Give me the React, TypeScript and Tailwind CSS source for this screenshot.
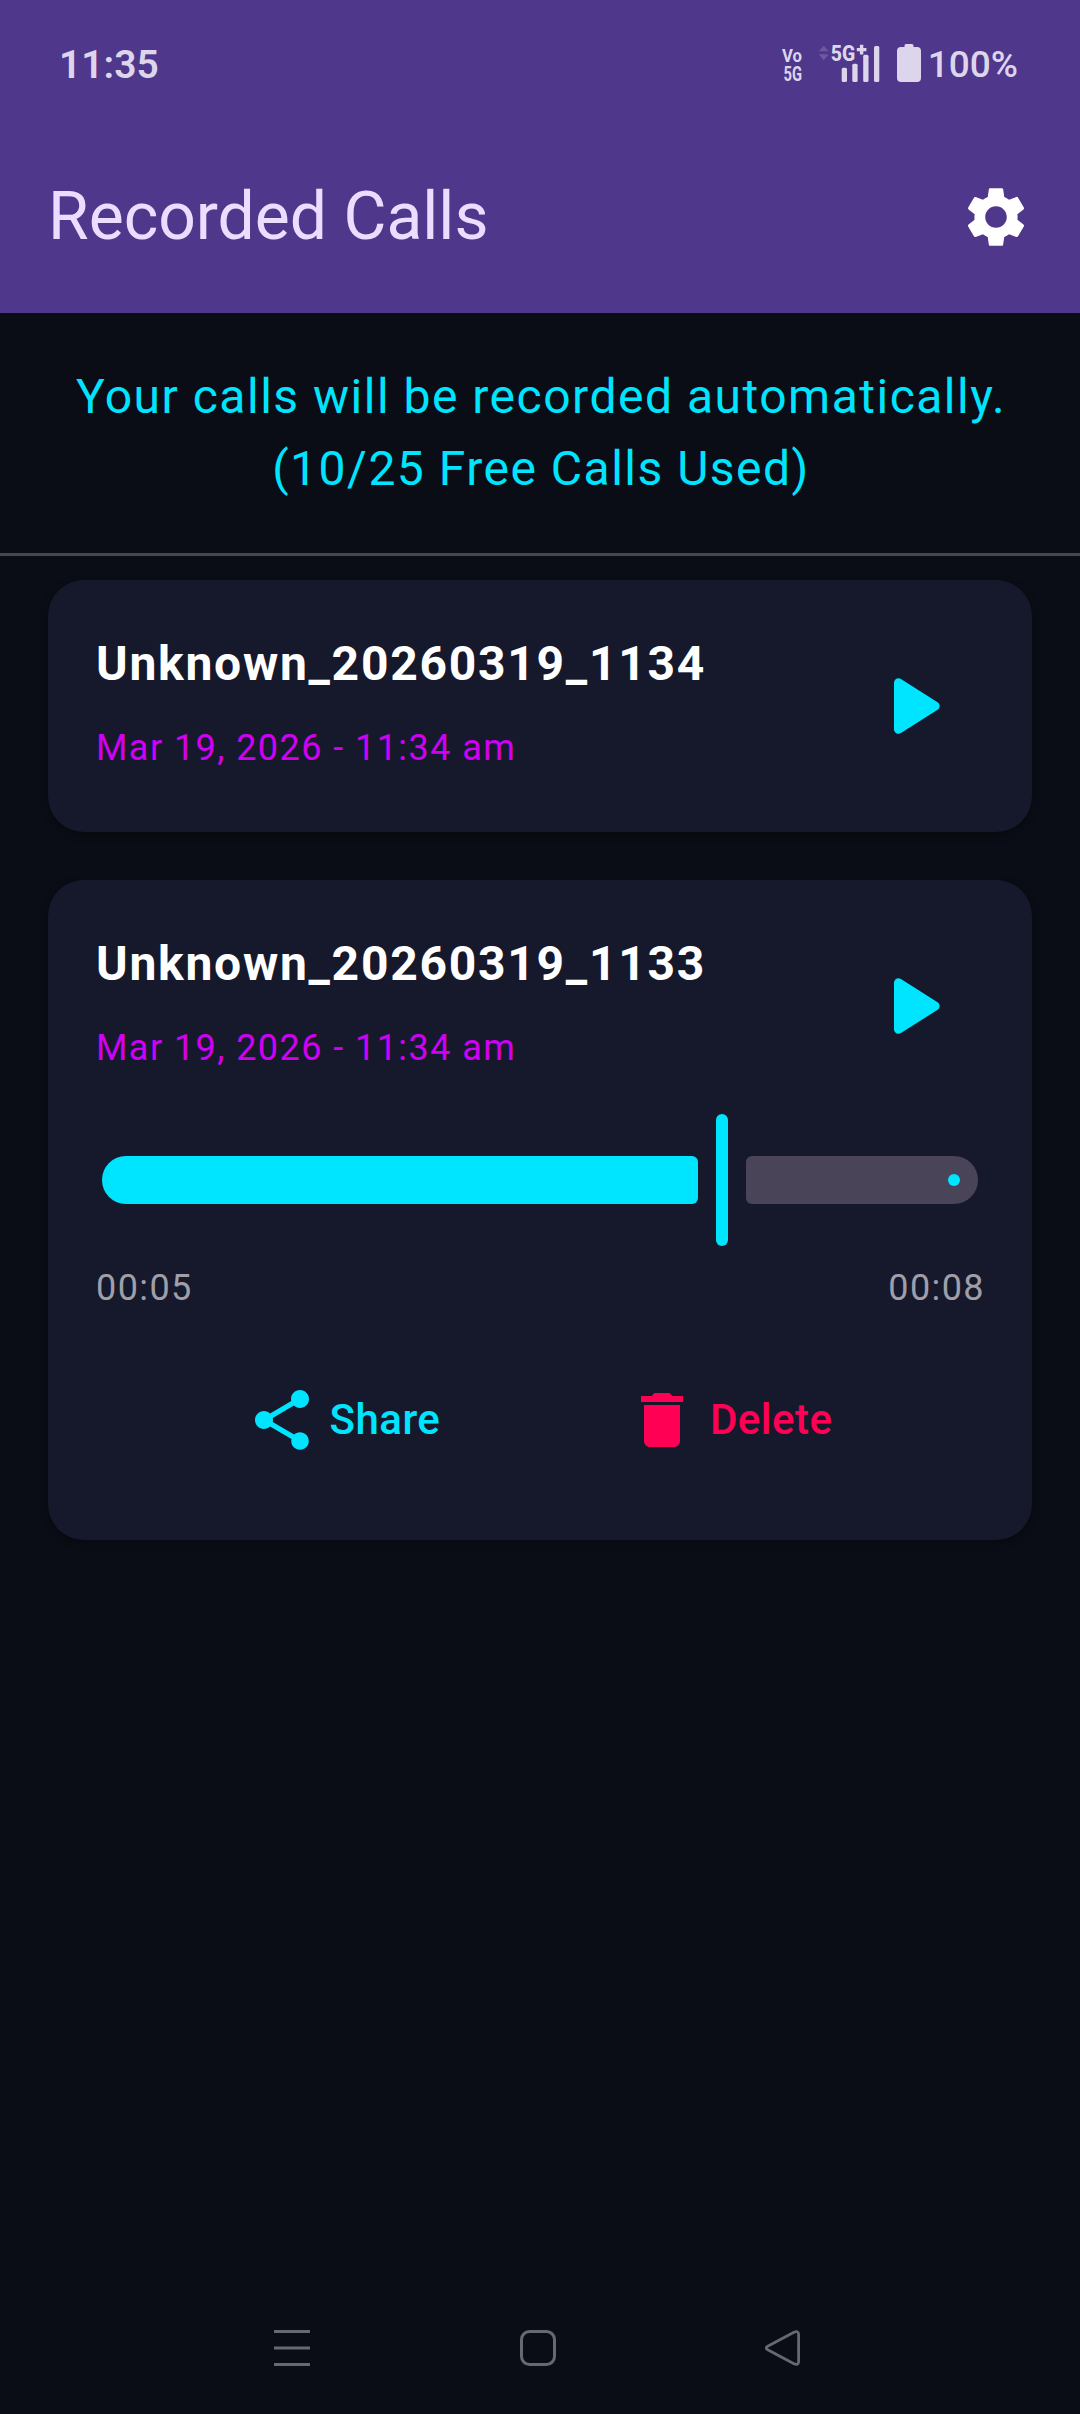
import { MdDelete, MdSettings, MdShare } from "react-icons/md";

interface Recording {
  name: string;
  date: string;
  position?: string;
  duration?: string;
  progress?: number;
}

const recordings: Recording[] = [
  { name: "Unknown_20260319_1134", date: "Mar 19, 2026 - 11:34 am" },
  {
    name: "Unknown_20260319_1133",
    date: "Mar 19, 2026 - 11:34 am",
    position: "00:05",
    duration: "00:08",
    progress: 70.74,
  },
];

function VoIcon() {
  return (
    <svg width="22" height="50" viewBox="-1 -6 22 50" fill="currentColor">
      <text x="0" y="18.300" fontSize="19" fontWeight="700" textLength="20" lengthAdjust="spacingAndGlyphs">
        Vo
      </text>
      <text x="1.500" y="36.700" fontSize="21" fontWeight="700" textLength="18.500" lengthAdjust="spacingAndGlyphs">
        5G
      </text>
    </svg>
  );
}

function SignalIcon() {
  return (
    <svg width="62" height="50" viewBox="0 -6 62 50" fill="currentColor">
      <path d="M.7 7.300 5.700 1.700l5 5.600zM.7 10.200h10l-5 6z" opacity=".22" />
      <text x="12.800" y="17.300" fontSize="22" fontWeight="800" textLength="24.500" lengthAdjust="spacingAndGlyphs">
        5G
      </text>
      <path d="M41.900.7h3.400v3.200h3.100v3.300h-3.100v3.200h-3.400V7.200h-3.100V3.900h3.100z" />
      <rect x="23.700" y="23.700" width="5.300" height="14.300" rx="1.500" />
      <rect x="34.300" y="19.700" width="5.300" height="18.300" rx="1.500" />
      <rect x="45.200" y="10.700" width="5.300" height="27.300" rx="1.500" />
      <rect x="56" y="2" width="5.300" height="36" rx="1.500" />
    </svg>
  );
}

function BatteryIcon() {
  return (
    <svg width="24" height="38" viewBox="0 0 24 38" fill="currentColor">
      <path d="M9 0h6q1.500 0 1.500 1.500V3H20q4 0 4 4v27q0 4-4 4H4q-4 0-4-4V7q0-4 4-4h3.500V1.500Q7.500 0 9 0z" />
    </svg>
  );
}

function StatusBar() {
  return (
    <div className="flex h-[126px] items-center justify-between pr-[62px] pl-[59px] text-[#ddd5ec]">
      <span className="pt-[3px] text-[39px] leading-[46px] font-semibold">11:35</span>
      <div className="flex items-center">
        <VoIcon />
        <div className="ml-[15px]">
          <SignalIcon />
        </div>
        <div className="ml-[17px]">
          <BatteryIcon />
        </div>
        <span className="ml-[7px] pt-[3px] text-[37px] leading-[44px] font-medium">100%</span>
      </div>
    </div>
  );
}

function PlayIcon() {
  return (
    <svg width="108" height="108" viewBox="0 0 24 24" fill="#00e5ff">
      <path d="M8 6.82v10.36c0 .79.87 1.27 1.54.84l8.14-5.18c.62-.39.62-1.290 0-1.690L9.540 5.980C8.870 5.550 8 6.030 8 6.820z" />
    </svg>
  );
}

function Slider({ progress }: { progress: number }) {
  return (
    <div className="mt-6 flex h-36 items-center gap-[18px] px-1.5">
      <div
        className="h-12 shrink-0 rounded-l-[24px] rounded-r-[6px] bg-[#00e5ff]"
        style={{ width: `calc((100% - 12px) * ${progress / 100} - 15px)` }}
      />
      <div className="h-[132px] w-3 shrink-0 rounded-full bg-[#00e5ff]" />
      <div className="flex h-12 flex-1 items-center justify-end rounded-l-[6px] rounded-r-[24px] bg-[#4a4458] pr-[18px]">
        <div className="size-3 rounded-full bg-[#00e5ff]" />
      </div>
    </div>
  );
}

function RecordingCard({ recording }: { recording: Recording }) {
  const { name, date, position, duration, progress } = recording;

  return (
    <div className="rounded-[36px] bg-[#16192b] p-12 shadow-[0_3px_9px_rgba(0,0,0,0.28)]">
      <div className="flex h-[156px] items-center justify-between">
        <div className="self-start">
          <p className="text-[48px] leading-[72px] font-bold tracking-[1.74px] text-white">{name}</p>
          <p className="mt-6 text-[36px] leading-[48px] tracking-[1.44px] text-[#d000f5]">{date}</p>
        </div>
        <button className="flex size-36 items-center justify-center">
          <PlayIcon />
        </button>
      </div>

      {progress !== undefined && (
        <>
          <Slider progress={progress} />
          <div className="mt-3 -mr-px flex justify-between text-[36px] leading-[48px] tracking-[1.4px] text-[#a09fa9]">
            <span>{position}</span>
            <span>{duration}</span>
          </div>
          <div className="mt-9 flex h-36 items-center justify-evenly pr-0.5 text-[42px] leading-[60px] font-medium tracking-[0.5px]">
            <button className="flex items-center gap-3 px-9 text-[#00e5ff]">
              <MdShare size={72} />
              Share
            </button>
            <button className="flex items-center gap-3 px-9 text-[#ff0055]">
              <MdDelete size={72} />
              Delete
            </button>
          </div>
        </>
      )}
    </div>
  );
}

function NavBar() {
  return (
    <div className="flex h-[132px] items-center justify-between pr-[279px] pl-[274px] text-[#676871]">
      <svg width="36" height="36" fill="currentColor">
        <path d="M0 0h36v3H0zM0 16.500h36v3H0zM0 33h36v3H0z" />
      </svg>
      <svg width="36" height="36" fill="none" stroke="currentColor" strokeWidth="3">
        <rect x="1.500" y="1.500" width="33" height="33" rx="8" />
      </svg>
      <svg width="36" height="36" fill="none" stroke="currentColor" strokeWidth="2.800">
        <path d="M2.700 16.200 28.500 2.400Q33.600 0 33.600 4.500v27Q33.600 36 28.500 33.600L2.700 19.800Q-.3 18 2.700 16.200z" />
      </svg>
    </div>
  );
}

export default function App() {
  return (
    <div className="flex h-[2414px] w-[1080px] flex-col bg-[#0a0d15] font-['Roboto',sans-serif]">
      <header className="h-[313px] bg-[#4f378b]">
        <StatusBar />
        <div className="flex h-[182px] items-center justify-between pr-12 pl-12">
          <h1 className="text-[66px] leading-[84px] text-[#eaddff]">Recorded Calls</h1>
          <MdSettings size={72} className="text-white" />
        </div>
      </header>

      <p className="border-b-[3px] border-[#49454f] py-12 pl-0.5 text-center text-[48px] leading-[72px] tracking-[1.5px] text-[#00e5ff]">
        Your calls will be recorded automatically.
        <br />
        (10/25 Free Calls Used)
      </p>

      <main className="flex flex-1 flex-col gap-12 px-12 pt-6">
        {recordings.map((recording) => (
          <RecordingCard key={recording.name} recording={recording} />
        ))}
      </main>

      <NavBar />
    </div>
  );
}
